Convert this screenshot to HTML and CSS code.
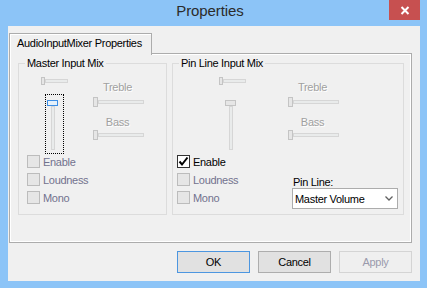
FILE: index.html
```html
<!DOCTYPE html>
<html>
<head>
<meta charset="utf-8">
<title>Properties</title>
<link rel="stylesheet" href="styles.css">
</head>
<body>
<div class="window">
  <div class="titlebar">
    <div class="title">Properties</div>
    <div class="close">
      <svg width="10" height="9" viewBox="0 0 10 9"><path d="M1.5 1 L8.5 8 M8.5 1 L1.5 8" stroke="#fff" stroke-width="2"/></svg>
    </div>
  </div>

  <div class="client">
    <div class="tabs">
      <div class="tab">AudioInputMixer Properties</div>
    </div>

    <div class="panel">
      <div class="groups">

        <fieldset class="group master">
          <legend>Master Input Mix</legend>
          <div class="mix">
            <div class="volume">
              <div class="hslider mini"><span class="thumb"></span><span class="track"></span></div>
              <div class="vslider focused"><span class="thumb"></span><span class="track"></span></div>
            </div>
            <div class="tone">
              <div class="static">Treble</div>
              <div class="hslider treble"><span class="thumb"></span><span class="track"></span></div>
              <div class="static bass">Bass</div>
              <div class="hslider bass-slider"><span class="thumb"></span><span class="track"></span></div>
            </div>
          </div>
          <div class="lower">
            <div class="checks">
              <div class="check disabled"><span class="box"></span>Enable</div>
              <div class="check disabled"><span class="box"></span>Loudness</div>
              <div class="check disabled"><span class="box"></span>Mono</div>
            </div>
          </div>
        </fieldset>

        <fieldset class="group pin">
          <legend>Pin Line Input Mix</legend>
          <div class="mix">
            <div class="volume">
              <div class="hslider mini"><span class="thumb"></span><span class="track"></span></div>
              <div class="vslider"><span class="thumb"></span><span class="track"></span></div>
            </div>
            <div class="tone">
              <div class="static">Treble</div>
              <div class="hslider treble"><span class="thumb"></span><span class="track"></span></div>
              <div class="static bass">Bass</div>
              <div class="hslider bass-slider"><span class="thumb"></span><span class="track"></span></div>
            </div>
          </div>
          <div class="lower">
            <div class="checks">
              <div class="check on">
                <span class="box"><svg width="11" height="11" viewBox="0 0 11 11"><path d="M1.5 5.5 L4 8.5 L9.5 1.5" fill="none" stroke="#000" stroke-width="2"/></svg></span>Enable
              </div>
              <div class="check disabled"><span class="box"></span>Loudness</div>
              <div class="check disabled"><span class="box"></span>Mono</div>
            </div>
            <div class="pinsel">
              <div class="pinsel-label">Pin Line:</div>
              <div class="combo">
                <span>Master Volume</span>
                <svg width="8" height="5" viewBox="0 0 8 5"><path d="M0.5 0.5 L4 4 L7.5 0.5" fill="none" stroke="#606060" stroke-width="1.3"/></svg>
              </div>
            </div>
          </div>
        </fieldset>

      </div>
    </div>

    <div class="buttons">
      <button class="btn default">OK</button>
      <button class="btn">Cancel</button>
      <button class="btn" disabled>Apply</button>
    </div>
  </div>
</div>
</body>
</html>
```

FILE: styles.css
```css
* {
  box-sizing: border-box;
  margin: 0;
  padding: 0;
}

body {
  font-family: "Liberation Sans", Arial, sans-serif;
  font-size: 11px;
  line-height: 12px;
  letter-spacing: -0.3px;
  color: #000;
}

.window {
  width: 427px;
  height: 288px;
  background: #8cc4f7;
  display: flex;
  flex-direction: column;
}

/* title bar */

.titlebar {
  height: 26px;
  flex: none;
  display: grid;
  grid-template-columns: 1fr auto 1fr;
  padding-right: 7px;
}

.title {
  grid-column: 2;
  font-size: 15px;
  line-height: 20px;
  padding-top: 1px;
  letter-spacing: -0.1px;
  color: #2b2b2b;
}

.close {
  grid-column: 3;
  justify-self: end;
  width: 31px;
  height: 20px;
  background: #c75050;
  display: flex;
  align-items: center;
  justify-content: center;
}

/* client area */

.client {
  flex: 1;
  margin: 0 7px 7px 8px;
  padding: 7px 8px 8px 1px;
  background: #f0f0f0;
  display: flex;
  flex-direction: column;
}

.tabs {
  display: flex;
  height: 20px;
}

.tab {
  position: relative;
  z-index: 1;
  width: 143px;
  height: 22px;
  padding: 3px 0 0 7px;
  border: 1px solid #acacac;
  border-bottom: none;
  background: #f0f0f0;
  box-shadow: inset 1px 1px 0 #fff;
}

.panel {
  height: 190px;
  border: 1px solid #acacac;
  box-shadow: inset 0 0 0 1px #fff;
  padding: 3px 0 0 8px;
}

.groups {
  display: flex;
  gap: 5px;
  height: 158px;
}

.group {
  border: 1px solid #dcdcdc;
  min-width: 0;
}

.master {
  width: 149px;
}

.pin {
  width: 232px;
}

legend {
  margin-left: 6px;
  padding: 0 2px;
  line-height: 12px;
}

/* sliders */

.mix {
  display: flex;
}

.volume {
  width: 27px;
  padding-top: 8px;
  display: flex;
  flex-direction: column;
  align-items: center;
}

.master .volume {
  margin-left: 22px;
}

.pin .volume {
  margin-left: 46px;
}

.hslider {
  display: flex;
  align-items: center;
  height: 10px;
}

.hslider .thumb {
  width: 5px;
  height: 10px;
  border: 1px solid #c4c4c4;
  background: #e6e6e6;
}

.hslider .track {
  flex: 1;
  height: 4px;
  border: 1px solid #d6d6d6;
  background: #e9ebeb;
}

.hslider.mini {
  width: 27px;
  height: 8px;
}

.mini .thumb {
  width: 4px;
  height: 8px;
}

.vslider {
  width: 19px;
  height: 60px;
  margin-top: 9px;
  padding: 5px 0 0 1px;
  border: 1px dotted transparent;
}

.vslider.focused {
  border-color: #000;
}

.vslider .thumb {
  display: block;
  width: 11px;
  height: 6px;
  border: 1px solid #c4c4c4;
  background: #e6e6e6;
}

.vslider.focused .thumb {
  border-color: #3d8ee5;
  background: #e5f1fb;
}

.vslider .track {
  display: block;
  width: 4px;
  height: 44px;
  margin-left: 4px;
  border: 1px solid #d6d6d6;
  background: #e9ebeb;
}

.tone {
  width: 51px;
  padding-top: 12px;
  display: flex;
  flex-direction: column;
}

.master .tone {
  margin-left: 25px;
}

.pin .tone {
  margin-left: 42px;
}

.static {
  text-align: center;
  padding-right: 2px;
  color: #a0a0a0;
  text-shadow: 1px 1px 0 #fff;
}

.treble {
  margin-top: 4px;
}

.bass {
  margin-top: 9px;
}

.bass-slider {
  margin-top: 2px;
}

/* check boxes */

.lower {
  display: flex;
  margin-top: 1px;
}

.checks {
  display: flex;
  flex-direction: column;
  gap: 5px;
}

.master .checks {
  margin-left: 8px;
}

.pin .checks {
  margin-left: 4px;
}

.check {
  display: flex;
  align-items: center;
  gap: 3px;
  height: 13px;
}

.check .box {
  width: 13px;
  height: 13px;
  border: 1px solid #bcbcbc;
  background: #e6e6e6;
  display: flex;
  align-items: center;
  justify-content: center;
}

.check.disabled {
  color: #72728e;
}

.check.on .box {
  border-color: #333;
  background: #fff;
}

/* pin line select */

.pinsel {
  margin-left: auto;
  margin-right: 5px;
  padding-top: 21px;
}

.pinsel-label {
  padding-left: 1px;
}

.combo {
  width: 106px;
  height: 21px;
  border: 1px solid #acacac;
  background: #fff;
  display: flex;
  align-items: center;
  justify-content: space-between;
  padding: 0 4px 0 2px;
}

/* dialog buttons */

.buttons {
  display: flex;
  justify-content: flex-end;
  gap: 8px;
  margin-top: 8px;
}

.btn {
  width: 73px;
  height: 22px;
  border: 1px solid #adadad;
  background: #e1e1e1;
  font: inherit;
  letter-spacing: inherit;
  color: #000;
}

.btn.default {
  border-color: #4c96e0;
}

.btn:disabled {
  border-color: #d4d4d4;
  background: #efefef;
  color: #9a9aac;
}
```
